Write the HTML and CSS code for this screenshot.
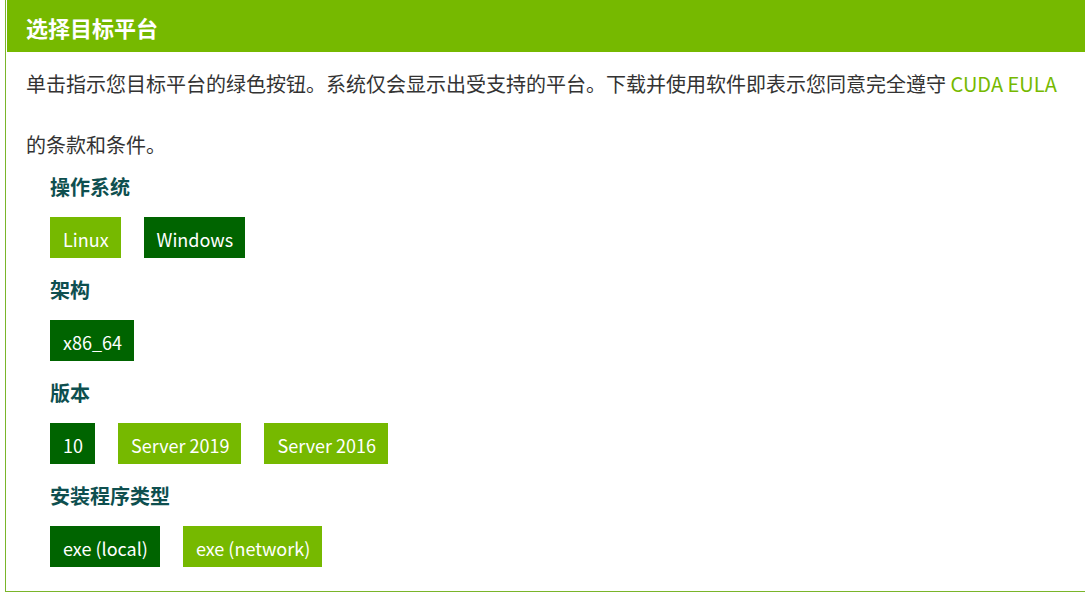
FILE: index.html
```html
<!DOCTYPE html>
<html lang="zh-CN">
<head>
<meta charset="utf-8">
<title>选择目标平台</title>
<link rel="stylesheet" href="styles.css">
</head>
<body>
<div class="panel">
  <div class="panel-header">选择目标平台</div>
  <p class="intro">单击指示您目标平台的绿色按钮。系统仅会显示出受支持的平台。下载并使用软件即表示您同意完全遵守 <a class="link" href="#">CUDA EULA</a> 的条款和条件。</p>
  <div class="options">
    <div class="section">
      <div class="section-title">操作系统</div>
      <div class="btn-row">
        <span class="btn">Linux</span>
        <span class="btn active">Windows</span>
      </div>
    </div>
    <div class="section">
      <div class="section-title">架构</div>
      <div class="btn-row">
        <span class="btn active">x86_64</span>
      </div>
    </div>
    <div class="section">
      <div class="section-title">版本</div>
      <div class="btn-row">
        <span class="btn active">10</span>
        <span class="btn">Server 2019</span>
        <span class="btn">Server 2016</span>
      </div>
    </div>
    <div class="section">
      <div class="section-title">安装程序类型</div>
      <div class="btn-row">
        <span class="btn active">exe (local)</span>
        <span class="btn">exe (network)</span>
      </div>
    </div>
  </div>
</div>
</body>
</html>
```

FILE: styles.css
```css
html, body {
  margin: 0;
  padding: 0;
  background: #ffffff;
}

body {
  font-family: "Noto Sans CJK SC", "Noto Sans", sans-serif;
  color: #333333;
}

.panel {
  margin-left: 5px;
  border-left: 1px solid #7ab52a;
  border-bottom: 1px solid #7ab52a;
  padding-left: 1px;
  padding-bottom: 24px;
}

.panel-header {
  background: #76b900;
  color: #ffffff;
  font-size: 22px;
  font-weight: 700;
  line-height: 47px;
  padding: 4px 0 1px 19px;
}

.intro {
  margin: 0;
  padding: 1px 20px 0 19px;
  font-size: 20px;
  line-height: 61px;
  color: #333333;
}

.link {
  color: #76b900;
  text-decoration: none;
}

.options {
  padding-left: 43px;
}

.section {
  margin-bottom: 20px;
}

.section:last-child {
  margin-bottom: 0;
}

.section-title {
  font-size: 20px;
  font-weight: 700;
  line-height: 24px;
  color: #0e4f4f;
  margin-bottom: 18px;
}

.btn-row {
  display: flex;
  gap: 23px;
}

.btn {
  display: block;
  background: #76b900;
  color: #ffffff;
  font-size: 18px;
  line-height: 27px;
  padding: 9px 12px 5px 13px;
}

.btn.active {
  background: #006400;
}
```
